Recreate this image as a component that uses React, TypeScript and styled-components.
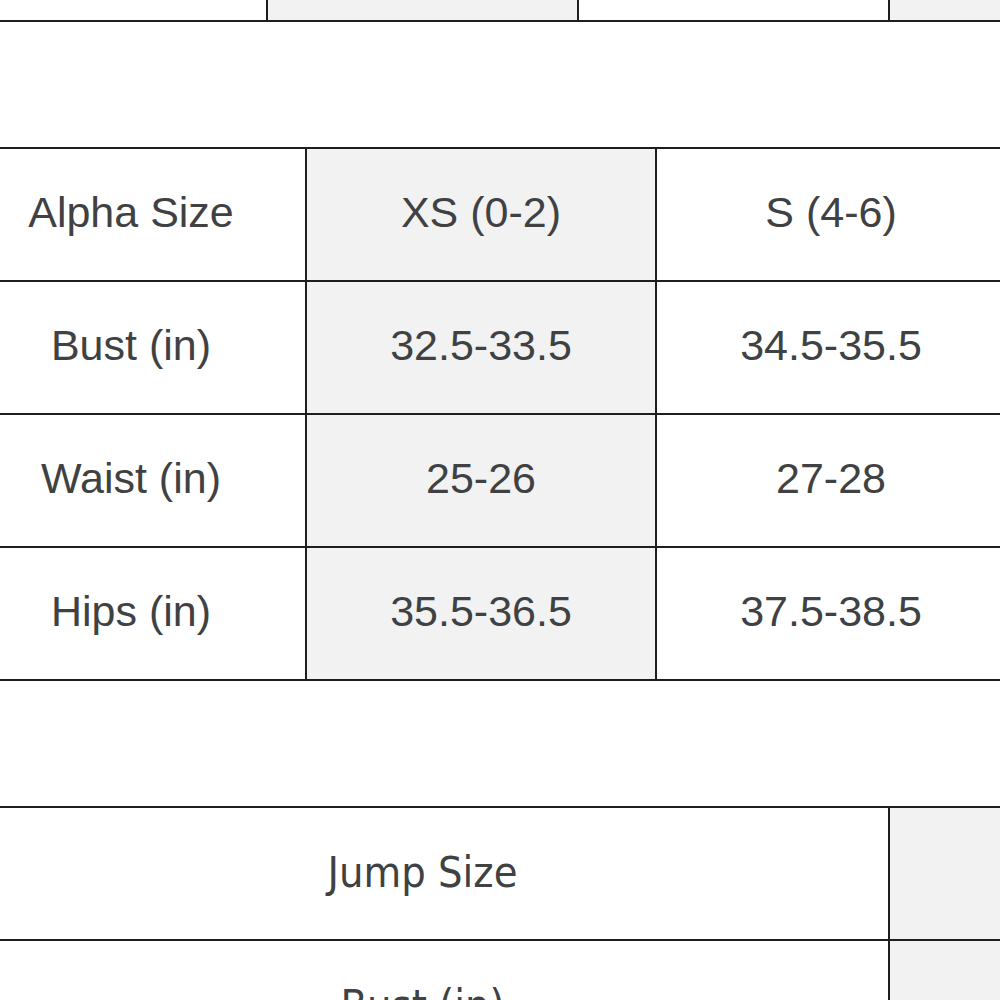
import React from 'react';
import styled, { createGlobalStyle } from 'styled-components';

const GlobalStyle = createGlobalStyle`
  html, body {
    margin: 0;
    padding: 0;
    background: #fff;
    overflow: hidden;
  }
  body {
    font-family: 'Liberation Sans', Arial, sans-serif;
    color: #3f4143;
  }
`;

// the page is scrolled: the chart above is only visible by its last row
const alphaRows = [
  ['Alpha Size', 'XS (0-2)', 'S (4-6)'],
  ['Bust (in)', '32.5-33.5', '34.5-35.5'],
  ['Waist (in)', '25-26', '27-28'],
  ['Hips (in)', '35.5-36.5', '37.5-38.5'],
];

const jumpRows = ['Jump Size', 'Bust (in)'];

const App = () => {
  return (
    <>
      <GlobalStyle />
      <Page>
        <ChartTable>
          <colgroup>
            <Col $w={311} />
            <Col $w={311} />
            <Col $w={311} />
            <Col $w={311} />
          </colgroup>
          <tbody>
            <Row>
              <Cell />
              <Cell $shade />
              <Cell />
              <Cell $shade />
            </Row>
          </tbody>
        </ChartTable>

        <ChartTable>
          <colgroup>
            <Col $w={350} />
            <Col $w={350} />
            <Col $w={350} />
          </colgroup>
          <tbody>
            {alphaRows.map((r) => (
              <Row key={r[0]}>
                <Cell>{r[0]}</Cell>
                <Cell $shade>{r[1]}</Cell>
                <Cell>{r[2]}</Cell>
              </Row>
            ))}
          </tbody>
        </ChartTable>

        <ChartTable>
          <colgroup>
            <Col $w={933} />
            <Col $w={311} />
          </colgroup>
          <tbody>
            {jumpRows.map((label) => (
              <Row key={label}>
                <Cell $narrow>{label}</Cell>
                <Cell $shade $narrow />
              </Row>
            ))}
          </tbody>
        </ChartTable>
      </Page>
    </>
  );
};

export default App;

const Page = styled.div`
  display: flex;
  flex-direction: column;
  gap: 125px;
  margin-left: -45px;
  margin-top: -113px;
  width: 1300px;
`;

const ChartTable = styled.table`
  border-collapse: collapse;
  table-layout: fixed;
  width: max-content;
`;

const Col = styled.col<{ $w: number }>`
  width: ${(p) => p.$w}px;
`;

const Row = styled.tr`
  height: 133px;
`;

const Cell = styled.td<{ $shade?: boolean; $narrow?: boolean }>`
  border: 2px solid #1e1e1e;
  background: ${(p) => (p.$shade ? '#f2f2f2' : '#fff')};
  text-align: center;
  vertical-align: middle;
  padding: 0 0 4px;
  font-family: ${(p) =>
    p.$narrow
      ? "'DejaVu Sans Condensed', 'Liberation Sans Narrow', 'Liberation Sans', Arial, sans-serif"
      : "'Liberation Sans', Arial, sans-serif"};
  font-stretch: ${(p) => (p.$narrow ? 'condensed' : 'normal')};
  font-size: 43px;
  color: #3f4143;
`;
